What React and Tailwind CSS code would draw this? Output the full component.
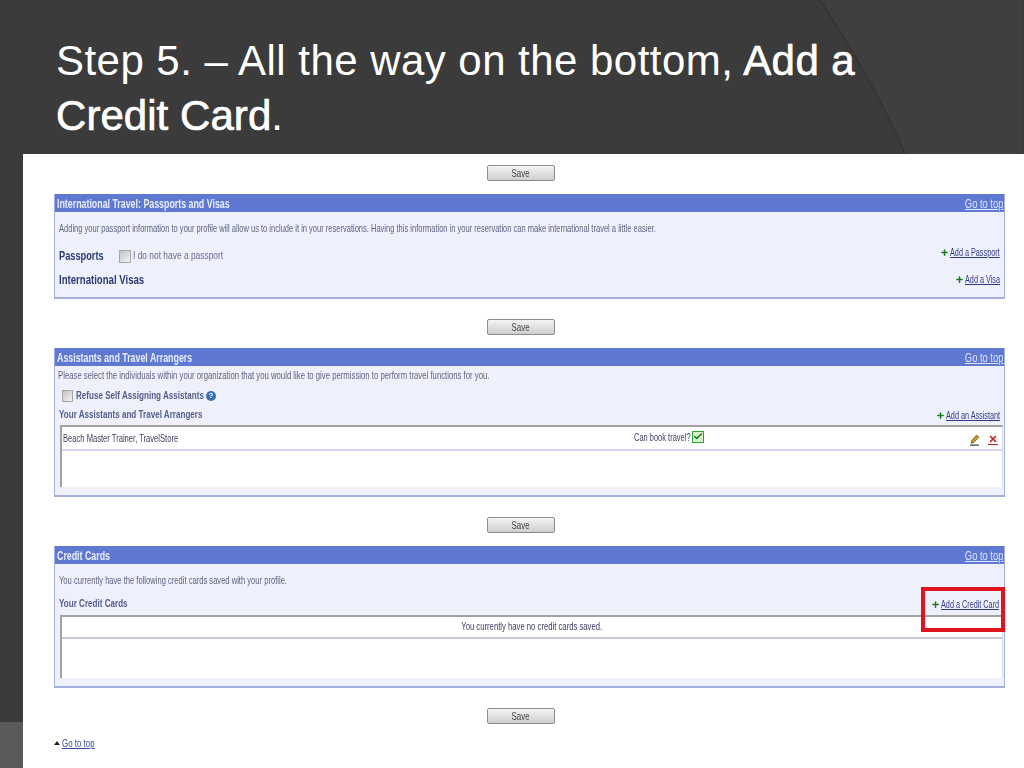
import { Check, Plus, X } from 'lucide-react';

function SaveButton({ className = '' }) {
    return (
        <div className={`flex pl-[433px] ${className}`}>
            <button className="flex h-4 w-[68px] items-center justify-center rounded-[2px] border border-[#8c8c8c] bg-gradient-to-b from-[#f4f4f4] to-[#cfcfcf] text-[11px] leading-none text-[#444]">
                <span className="scale-x-[0.72]">Save</span>
            </button>
        </div>
    );
}

function SectionHeader({ title }) {
    return (
        <div className="flex h-[18px] items-center justify-between bg-[#5f79d3] pl-[2px] pr-[1px] pt-[2px] text-white">
            <span className="origin-left scale-x-[0.736] whitespace-nowrap text-[12px] font-bold text-[#e8ecfa]">{title}</span>
            <a className="origin-right scale-x-[0.78] whitespace-nowrap text-[12px] text-[#dfe5f8] underline">Go to top</a>
        </div>
    );
}

function AddLink({ label, className = '', widthClass }) {
    return (
        <span className={`flex items-center text-[11px] text-[#2f3a86] ${className}`}>
            <Plus size={9} strokeWidth={4} className="mr-px text-[#1f7a1f]" />
            <span className={widthClass}>
                <a className="block origin-left scale-x-[0.66] whitespace-nowrap underline">{label}</a>
            </span>
        </span>
    );
}

function Checkbox({ className = '' }) {
    return <span className={`block border border-[#a5a5a5] bg-gradient-to-br from-[#c4c4c4] to-[#f2f2f2] ${className}`} />;
}

function ListTable({ children }) {
    return (
        <div className="ml-[5px] mr-[1px] border-t-2 border-l-2 border-r border-[#a2a2a2] border-r-[#dcdcef] bg-white">
            {children}
        </div>
    );
}

export default function App() {
    return (
        <div className="relative flex h-[768px] w-[1024px] flex-col overflow-hidden bg-[#3b3b3b] font-['Liberation_Sans',Arial,sans-serif]">
            <svg className="absolute left-0 top-0" width="1024" height="154" viewBox="0 0 1024 154">
                <path d="M820 0 C 845 38, 880 95, 905 154 L1024 154 L1024 0 Z" fill="#3f3f3f" />
                <path d="M820 0 C 845 38, 880 95, 905 154" fill="none" stroke="#343434" strokeWidth="1.5" />
                <rect x="1021" y="0" width="3" height="154" fill="#3b3b3b" />
            </svg>

            <h1 className="relative h-[154px] pl-[56px] pt-[34px] text-[42px] font-normal leading-[54.5px] tracking-[0.46px] text-white">
                Step 5. – All the way on the bottom, <span className="[-webkit-text-stroke:0.7px_white]">Add a</span>
                <br />
                <span className="tracking-[0.05px]">
                    <span className="[-webkit-text-stroke:0.7px_white]">Credit Card</span>.
                </span>
            </h1>

            <div className="relative flex h-[614px] w-[23px] flex-col">
                <div className="absolute left-0 top-[568px] h-[46px] w-[23px] bg-[#5a5a5a]" />
            </div>

            <main className="absolute bottom-0 left-[23px] right-0 top-[154px] bg-white pl-[31px] pr-[19px] pt-[11px] text-[#444f78] blur-[0.35px]">
                <SaveButton />

                <section className="mt-[13px] h-[105px] border-b-2 border-x border-[#a3afe0] bg-[#eef1fb]">
                    <SectionHeader title="International Travel: Passports and Visas" />
                    <p className="ml-[4px] mt-[10px] origin-left scale-x-[0.684] whitespace-nowrap text-[11px] leading-3 text-[#5d6480]">
                        Adding your passport information to your profile will allow us to include it in your reservations. Having this information in your reservation can make international travel a little easier.
                    </p>
                    <div className="mt-[13px] flex items-center justify-between px-[4px]">
                        <div className="flex items-center">
                            <span className="w-[60px] origin-left scale-x-[0.77] whitespace-nowrap text-[12px] font-bold text-[#2c3a78]">Passports</span>
                            <Checkbox className="h-[13px] w-[12px]" />
                            <span className="ml-[2px] origin-left scale-x-[0.8] whitespace-nowrap text-[10.5px] text-[#666d8c]">I do not have a passport</span>
                        </div>
                        <AddLink label="Add a Passport" widthClass="w-[50px]" className="-translate-y-1" />
                    </div>
                    <div className="mt-[6px] flex items-center justify-between px-[4px]">
                        <span className="origin-left scale-x-[0.8] whitespace-nowrap text-[12px] font-bold text-[#2c3a78]">International Visas</span>
                        <AddLink label="Add a Visa" widthClass="w-[35px]" className="-translate-y-px" />
                    </div>
                </section>

                <SaveButton className="mt-[20px]" />

                <section className="mt-[13px] h-[149px] border-b-2 border-x border-[#a3afe0] bg-[#eef1fb]">
                    <SectionHeader title="Assistants and Travel Arrangers" />
                    <p className="ml-[3px] mt-[3px] origin-left scale-x-[0.705] whitespace-nowrap text-[11px] leading-3 text-[#5d6480]">
                        Please select the individuals within your organization that you would like to give permission to perform travel functions for you.
                    </p>
                    <div className="ml-[7px] mt-[7px] flex items-center">
                        <Checkbox className="h-[12px] w-[11px]" />
                        <span className="ml-[3px] w-[130px] origin-left scale-x-[0.77] whitespace-nowrap text-[10.5px] font-bold text-[#55608c]">Refuse Self Assigning Assistants</span>
                        <span className="flex h-[10px] w-[10px] items-center justify-center rounded-full bg-[#3a6fb8] text-[8px] font-bold leading-none text-white">?</span>
                    </div>
                    <div className="mt-[3px] flex items-center justify-between pl-[4px] pr-[3px]">
                        <span className="origin-left scale-x-[0.77] whitespace-nowrap text-[10.5px] font-bold text-[#55608c]">Your Assistants and Travel Arrangers</span>
                        <AddLink label="Add an Assistant" widthClass="w-[55px]" />
                    </div>
                    <div className="mt-[2px]">
                        <ListTable>
                            <div className="flex h-[24px] items-center border-b-2 border-[#d5d5f2] pl-[1px] text-[11px] text-[#3b3f5e]">
                                <span className="w-[571px] origin-left scale-x-[0.69] whitespace-nowrap">Beach Master Trainer, TravelStore</span>
                                <span className="mb-[3px] w-[58px] origin-left scale-x-[0.68] whitespace-nowrap">Can book travel?</span>
                                <span className="mb-[3px] flex h-3 w-3 items-center justify-center border border-[#2aa52a] bg-[#d9f2d0]">
                                    <Check size={11} strokeWidth={3.5} className="text-[#157a15]" />
                                </span>
                                <svg className="ml-[265px] mt-[3px]" width="11" height="12" viewBox="0 0 10 11">
                                    <path d="M7 1 L9 3 L4 8 L2 8.5 L2.5 6 Z" fill="#c9a227" stroke="#5c4a12" strokeWidth="0.7" />
                                    <path d="M1 10.2 H9" stroke="#222" strokeWidth="1" />
                                </svg>
                                <span className="ml-[8px] mt-[3px] border-b border-[#c22020] leading-none">
                                    <X size={10} strokeWidth={4} className="text-[#c81e1e]" />
                                </span>
                            </div>
                            <div className="h-[36px]" />
                        </ListTable>
                    </div>
                </section>

                <SaveButton className="mt-[20px]" />

                <section className="relative mt-[13px] h-[142px] border-b-2 border-x border-[#a3afe0] bg-[#eef1fb]">
                    <SectionHeader title="Credit Cards" />
                    <p className="ml-[4px] mt-[10px] origin-left scale-x-[0.69] whitespace-nowrap text-[11px] leading-3 text-[#5d6480]">
                        You currently have the following credit cards saved with your profile.
                    </p>
                    <div className="mt-[10px] flex items-center justify-between px-[4px]">
                        <span className="origin-left scale-x-[0.77] whitespace-nowrap text-[10.5px] font-bold text-[#55608c]">Your Credit Cards</span>
                        <AddLink label="Add a Credit Card" widthClass="w-[59px]" />
                    </div>
                    <div className="mt-[2px]">
                        <ListTable>
                            <div className="flex h-[22px] items-center justify-center border-b-2 border-[#c9c9d6] text-[11px] text-[#3b3f5e]">
                                <span className="scale-x-[0.7] whitespace-nowrap">You currently have no credit cards saved.</span>
                            </div>
                            <div className="h-[39px]" />
                        </ListTable>
                    </div>
                    <div className="absolute left-[866px] top-[41px] h-[45px] w-[84px] border-4 border-[#e0141f]" />
                </section>

                <SaveButton className="mt-[20px]" />

                <div className="mt-[11px] flex items-center text-[11px] text-[#3a4aa0]">
                    <span className="mr-[2px] h-0 w-0 border-x-[3px] border-b-[4px] border-x-transparent border-b-[#222]" />
                    <a className="origin-left scale-x-[0.72] whitespace-nowrap underline">Go to top</a>
                </div>
            </main>
        </div>
    );
}
